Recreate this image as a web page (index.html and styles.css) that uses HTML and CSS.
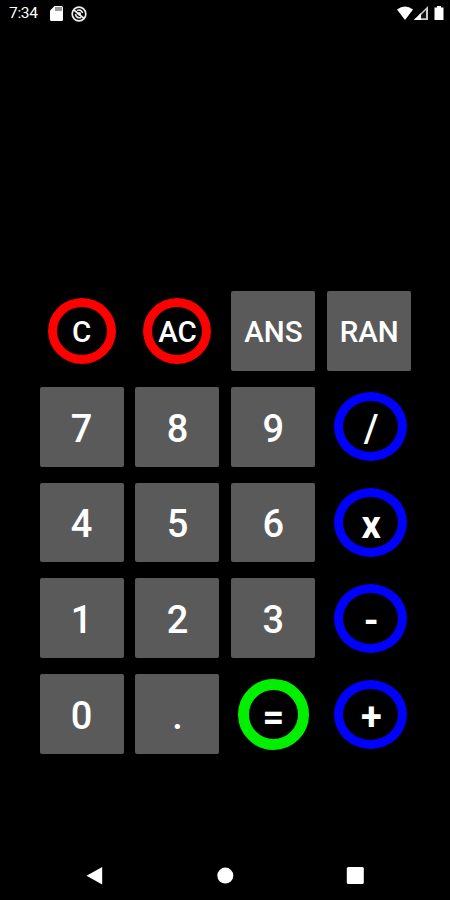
FILE: index.html
```
<!DOCTYPE html>
<html lang="en">
<head>
    <meta charset="UTF-8">
    <meta name="viewport" content="width=device-width, initial-scale=1.0">
    <title>Calculator</title>
    <link rel="stylesheet" href="styles.css">
</head>
<body>
    <header class="status-bar">
        <span class="time">7:34</span>
        <svg class="sd" width="13" height="15" viewBox="0 0 13 15">
            <path d="M4.5 0H11.5Q13 0 13 1.5V13.5Q13 15 11.5 15H1.5Q0 15 0 13.5V4.5Z" fill="#fff"/>
            <path d="M5 1H12V5H5Z" fill="#999"/>
        </svg>
        <svg class="sync" width="16" height="16" viewBox="0 0 16 16" fill="none" stroke="#eee">
            <circle cx="8" cy="8" r="6.8" stroke-width="1.7"/>
            <path d="M3 4L13 12.5" stroke-width="1.7"/>
            <path d="M6 4.4Q10 2.8 11.7 7M4.4 8Q5.5 12.7 10 11.6" stroke-width="1.5"/>
            <circle cx="8.3" cy="7.8" r="1.8" fill="#eee" stroke="none"/>
        </svg>
        <svg class="signals" width="49" height="16" viewBox="0 0 49 16">
            <path d="M0 3.5Q8 -2.5 16 3.5L8 14Z" fill="#fff"/>
            <path d="M17 14L31 0V14Z" fill="#ccc"/>
            <path d="M24 12.2V9L29 4V12.2Z" fill="#111"/>
            <path d="M17 14L24 7V14Z" fill="#fff"/>
            <path d="M40 0H44V1.5H46.5V14H37.5V1.5H40Z" fill="#fff"/>
        </svg>
    </header>
    <main>
        <div class="display"></div>
        <div class="keypad">
            <button class="key word red">C</button>
            <button class="key word red">AC</button>
            <button class="key word">ANS</button>
            <button class="key word">RAN</button>
            <button class="key">7</button>
            <button class="key">8</button>
            <button class="key">9</button>
            <button class="key blue">/</button>
            <button class="key">4</button>
            <button class="key">5</button>
            <button class="key">6</button>
            <button class="key blue bold">x</button>
            <button class="key">1</button>
            <button class="key">2</button>
            <button class="key">3</button>
            <button class="key blue bold">-</button>
            <button class="key">0</button>
            <button class="key">.</button>
            <button class="key green bold">=</button>
            <button class="key blue bold">+</button>
        </div>
    </main>
    <nav class="nav-bar">
        <svg width="18" height="20" viewBox="0 0 18 20"><path d="M0.5 9.7L16.2 1V18.4Z" fill="#fff"/></svg>
        <svg width="18" height="20" viewBox="0 0 18 20"><circle cx="9.3" cy="9.6" r="8" fill="#fff"/></svg>
        <svg width="18" height="20" viewBox="0 0 18 20"><rect x="0.8" y="1.1" width="17" height="17" rx="1.5" fill="#fff"/></svg>
    </nav>
</body>
</html>
```
FILE: styles.css
```
*{
    box-sizing: border-box;
}
body{
    margin:0;
    height:900px;
    display:flex;
    flex-direction: column;
    background-color: #000;
    color:#fff;
    font-family: Roboto, sans-serif;
    overflow: hidden;
}
.status-bar{
    height:27px;
    padding:0 7px 0 9px;
    display:flex;
    align-items: center;
}
.time{
    width:41px;
    font-size: 15.5px;
    line-height: 27px;
    letter-spacing: -0.3px;
}
.sync{
    margin-left: 8px;
}
.signals{
    margin-left: auto;
    margin-right: -3px;
}
.display{
    height:264px;
}
.keypad{
    width:372px;
    margin-left: 39.6px;
    display:grid;
    grid-template-columns: repeat(4,84px);
    grid-auto-rows: 79.8px;
    column-gap: 11.9px;
    row-gap: 16px;
    align-items: center;
    justify-items: center;
}
.key{
    width:84px;
    height:79.75px;
    padding:4px 0 0;
    border:none;
    border-radius: 2px;
    background-color: #5a5a5b;
    color:#fff;
    font-family: Roboto, sans-serif;
    font-size: 38px;
    font-weight: 500;
    line-height: 1;
    text-align: center;
}
.word{
    font-size: 29.5px;
}
.red, .blue, .green{
    border-radius: 50%;
    background-color: transparent;
}
.red{
    width:68px;
    height:66px;
    border:9px solid #f00;
}
.blue{
    width:73px;
    height:69px;
    margin-left: 2px;
    border:9px solid #00f;
    padding: 5px 0 0 2px;
}
.green{
    width:71px;
    height:71px;
    margin-top: 1px;
    border:11px solid #00f000;
}
.bold{
    font-weight: 700;
}
.nav-bar{
    margin-top: auto;
    height:49px;
    padding:0 86px;
    display:flex;
    align-items: center;
    justify-content: space-between;
}
```
